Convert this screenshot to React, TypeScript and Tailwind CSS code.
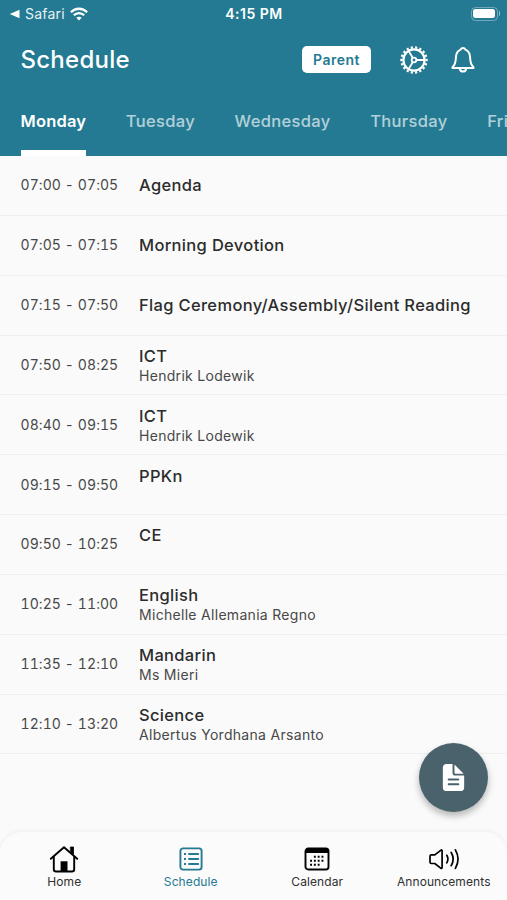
import type { ReactNode } from 'react'
import { IoDocumentText } from 'react-icons/io5'
import clsx from 'clsx'

type Lesson = {
  time: string
  subject: string
  // undefined = title only, empty string = teacher line is reserved but blank
  teacher?: string
}

const lessons: Lesson[] = [
  { time: '07:00 - 07:05', subject: 'Agenda' },
  { time: '07:05 - 07:15', subject: 'Morning Devotion' },
  { time: '07:15 - 07:50', subject: 'Flag Ceremony/Assembly/Silent Reading' },
  { time: '07:50 - 08:25', subject: 'ICT', teacher: 'Hendrik Lodewik' },
  { time: '08:40 - 09:15', subject: 'ICT', teacher: 'Hendrik Lodewik' },
  { time: '09:15 - 09:50', subject: 'PPKn', teacher: '' },
  { time: '09:50 - 10:25', subject: 'CE', teacher: '' },
  { time: '10:25 - 11:00', subject: 'English', teacher: 'Michelle Allemania Regno' },
  { time: '11:35 - 12:10', subject: 'Mandarin', teacher: 'Ms Mieri' },
  { time: '12:10 - 13:20', subject: 'Science', teacher: 'Albertus Yordhana Arsanto' },
]

const days = ['Monday', 'Tuesday', 'Wednesday', 'Thursday', 'Friday']

function GearIcon() {
  return (
    <svg width="28" height="28" viewBox="0 0 28 28" fill="none" stroke="currentColor">
      <circle cx="14" cy="14" r="12.6" strokeWidth="2.2" pathLength="36" strokeDasharray="1 1" strokeDashoffset="0.5" />
      <circle cx="14" cy="14" r="10.6" strokeWidth="2.2" />
      <circle cx="14" cy="14" r="2.3" strokeWidth="1.8" />
      <path d="M16.3 14H25M12.8 12 8.5 4.6M12.8 16 8.5 23.4" strokeWidth="1.8" />
    </svg>
  )
}

function BellIcon() {
  return (
    <svg width="26" height="28" viewBox="0 0 26 28" fill="none" stroke="currentColor" strokeWidth="2" strokeLinecap="round" strokeLinejoin="round">
      <path d="M13 2c-1.200 0-2 .7-2.400 1.700C7.700 4.900 6.200 7.400 6 10.800c-.3 5.200-.9 7.200-2.200 8.900-.8 1-1.400 1.500-1.400 2.300h21.200c0-.8-.6-1.300-1.400-2.300-1.300-1.700-1.900-3.700-2.200-8.900-.2-3.400-1.700-5.900-4.600-7.100C15 2.700 14.200 2 13 2Z" />
      <path d="M9.800 22.500c.3 2 1.500 3.100 3.200 3.100s2.900-1.100 3.200-3.100" />
    </svg>
  )
}

function HomeIcon() {
  return (
    <svg width="30" height="28" viewBox="0 0 30 28" fill="none" stroke="currentColor" strokeWidth="1.9" strokeLinecap="round" strokeLinejoin="round">
      <path d="M1.800 13.800 15 2.300l13.200 11.500" />
      <path d="M4.800 11.800v12.400c0 1.500.8 2.300 2.300 2.300h15.800c1.500 0 2.300-.8 2.300-2.300V11.800" />
      <path d="M21.700 2h2.800v7.200l-2.800-2.500z" fill="currentColor" strokeWidth="0.8" />
      <path d="M11.600 16.300h6.900v10h-6.900z" fill="currentColor" stroke="none" />
    </svg>
  )
}

function ListIcon() {
  return (
    <svg width="24" height="24" viewBox="0 0 24 24" fill="none" stroke="currentColor" strokeWidth="1.9">
      <rect x="1.400" y="1.400" width="21.200" height="21.200" rx="2.600" />
      <path d="M10 7h9.200M10 12h9.200M10 17h9.200" strokeLinecap="round" />
      <path d="M5 7h2M5 12h2M5 17h2" strokeWidth="2" />
    </svg>
  )
}

function CalendarIcon() {
  return (
    <svg width="26" height="24" viewBox="0 0 26 24" fill="none" stroke="currentColor">
      <rect x="1.500" y="1.500" width="23" height="21" rx="2.800" strokeWidth="1.900" />
      <path d="M1.500 5.500V4.300c0-1.800 1-2.800 2.800-2.800h17.400c1.800 0 2.800 1 2.800 2.800v1.200z" fill="currentColor" />
      <path d="M9.900 9.800h11" strokeWidth="1.900" strokeDasharray="1.900 1.900" />
      <path d="M6.100 13.800h15" strokeWidth="1.900" strokeDasharray="1.900 1.900" />
      <path d="M6.100 17.800h10" strokeWidth="1.900" strokeDasharray="1.900 1.900" />
    </svg>
  )
}

function SpeakerIcon() {
  return (
    <svg width="32" height="24" viewBox="0 0 32 24" fill="none" stroke="currentColor" strokeWidth="1.700" strokeLinecap="round" strokeLinejoin="round">
      <path d="M2 9.300c0-.9.5-1.400 1.400-1.400H6.800l5.900-4.600c.7-.6 1.400-.3 1.400.6v16.600c0 .9-.7 1.200-1.400.6l-5.900-4.600H3.400c-.9 0-1.400-.5-1.400-1.400z" />
      <path d="M18.800 8.300c1.400 2.400 1.400 5.200 0 7.600M23.200 5.500c2.500 4.200 2.500 9 0 13.200M27.400 2.800c3.400 6 3.400 12.600 0 18.600" />
    </svg>
  )
}

function StatusBar() {
  return (
    <div className="grid h-[27px] grid-cols-3 items-center pl-[9px] pr-[7px] text-[14px]">
      <div className="flex items-center">
        <svg width="11" height="10" viewBox="0 0 11 10" fill="currentColor">
          <path d="M.8 5 10.500.8v8.400z" />
        </svg>
        <span className="ml-[5px] tracking-[0.200px] opacity-90">Safari</span>
        <svg className="ml-[5px]" width="18" height="14" viewBox="0 0 18 14" fill="none" stroke="currentColor" strokeWidth="2.300">
          <path d="M.9 5.200c4.600-4.600 11.600-4.600 16.200 0M3.800 8.300c3-3 7.400-3 10.400 0" />
          <path d="M6.300 10.800c1.600-1.500 3.800-1.500 5.400 0L9 13.500z" fill="currentColor" stroke="none" />
        </svg>
      </div>
      <div className="whitespace-nowrap pr-px text-center font-semibold tracking-[0.5px]">4:15 PM</div>
      <div className="flex items-center justify-end">
        <div className="h-[14px] w-[27px] rounded-[4.5px] border border-white/35 p-[1.500px]">
          <div className="h-full rounded-[2.500px] bg-white" />
        </div>
        <div className="ml-px h-[5px] w-[1.5px] rounded-r bg-white/50" />
      </div>
    </div>
  )
}

function NavItem({ label, icon, active }: { label: string; icon: ReactNode; active?: boolean }) {
  return (
    <div className={clsx('flex w-1/4 flex-col items-center', active ? 'text-[#237a92]' : 'text-black')}>
      <div className="flex h-[28px] items-center">{icon}</div>
      <span className={clsx('text-[12px] leading-[17px] tracking-[0.1px]', !active && 'text-[#303030]')}>{label}</span>
    </div>
  )
}

export default function App() {
  return (
    <div className="flex h-[900px] w-[507px] flex-col overflow-hidden bg-[#fafafa] font-['Inter',sans-serif]">
      <header className="h-[156px] shrink-0 bg-[#237a92] text-white">
        <StatusBar />
        <div className="flex h-[65px] items-center pl-[20.500px] pr-[31px]">
          <h1 className="text-[24px] font-medium tracking-[0.25px]">Schedule</h1>
          <div className="ml-auto flex h-[27px] w-[69px] items-center justify-center rounded-[5px] bg-white text-[14px] font-semibold tracking-[0.5px] text-[#237a92]">
            <span className="-mt-px">Parent</span>
          </div>
          <div className="ml-[29px]">
            <GearIcon />
          </div>
          <div className="ml-[22px]">
            <BellIcon />
          </div>
        </div>
        <nav className="flex h-[64px] gap-[39.5px] overflow-hidden whitespace-nowrap pl-[20.500px] text-[16.5px] font-medium tracking-[0.35px]">
          {days.map((day, i) => (
            <div key={day} className="flex shrink-0 flex-col justify-between">
              <span className={clsx('pt-[17px] leading-[24px]', i === 0 ? 'font-semibold tracking-[0.2px]' : 'text-white/65')}>{day}</span>
              {i === 0 && <div className="h-[6px] bg-white" />}
            </div>
          ))}
        </nav>
      </header>

      <main className="flex-1">
        {lessons.map((lesson) => (
          <div key={lesson.time} className="flex h-[59.85px] items-center border-b border-[#efefef] pl-[20.500px]">
            <div className="w-[118.500px] pb-px text-[14px] tracking-[0.080px] text-[#484848] tabular-nums">{lesson.time}</div>
            <div>
              <div className="text-[16.5px] font-medium leading-[20px] tracking-[0.33px] text-[#2c2c2c]">{lesson.subject}</div>
              {lesson.teacher !== undefined && (
                <div className="h-[18px] text-[14px] leading-[19px] tracking-[0.3px] text-[#484848]">{lesson.teacher}</div>
              )}
            </div>
          </div>
        ))}
      </main>

      <button className="absolute left-[418.5px] top-[743px] flex size-[69px] items-center justify-center rounded-full bg-[#4a626b] text-white shadow-[0_4px_7px_rgba(0,0,0,0.28)]">
        <IoDocumentText size={31} />
      </button>

      <footer className="flex h-[68px] shrink-0 rounded-t-[22px] bg-[#fbfbfb] pl-px pt-[12.500px] shadow-[0_-1px_5px_rgba(0,0,0,0.05)]">
        <NavItem label="Home" icon={<HomeIcon />} />
        <NavItem label="Schedule" icon={<ListIcon />} active />
        <NavItem label="Calendar" icon={<CalendarIcon />} />
        <NavItem label="Announcements" icon={<SpeakerIcon />} />
      </footer>
    </div>
  )
}
